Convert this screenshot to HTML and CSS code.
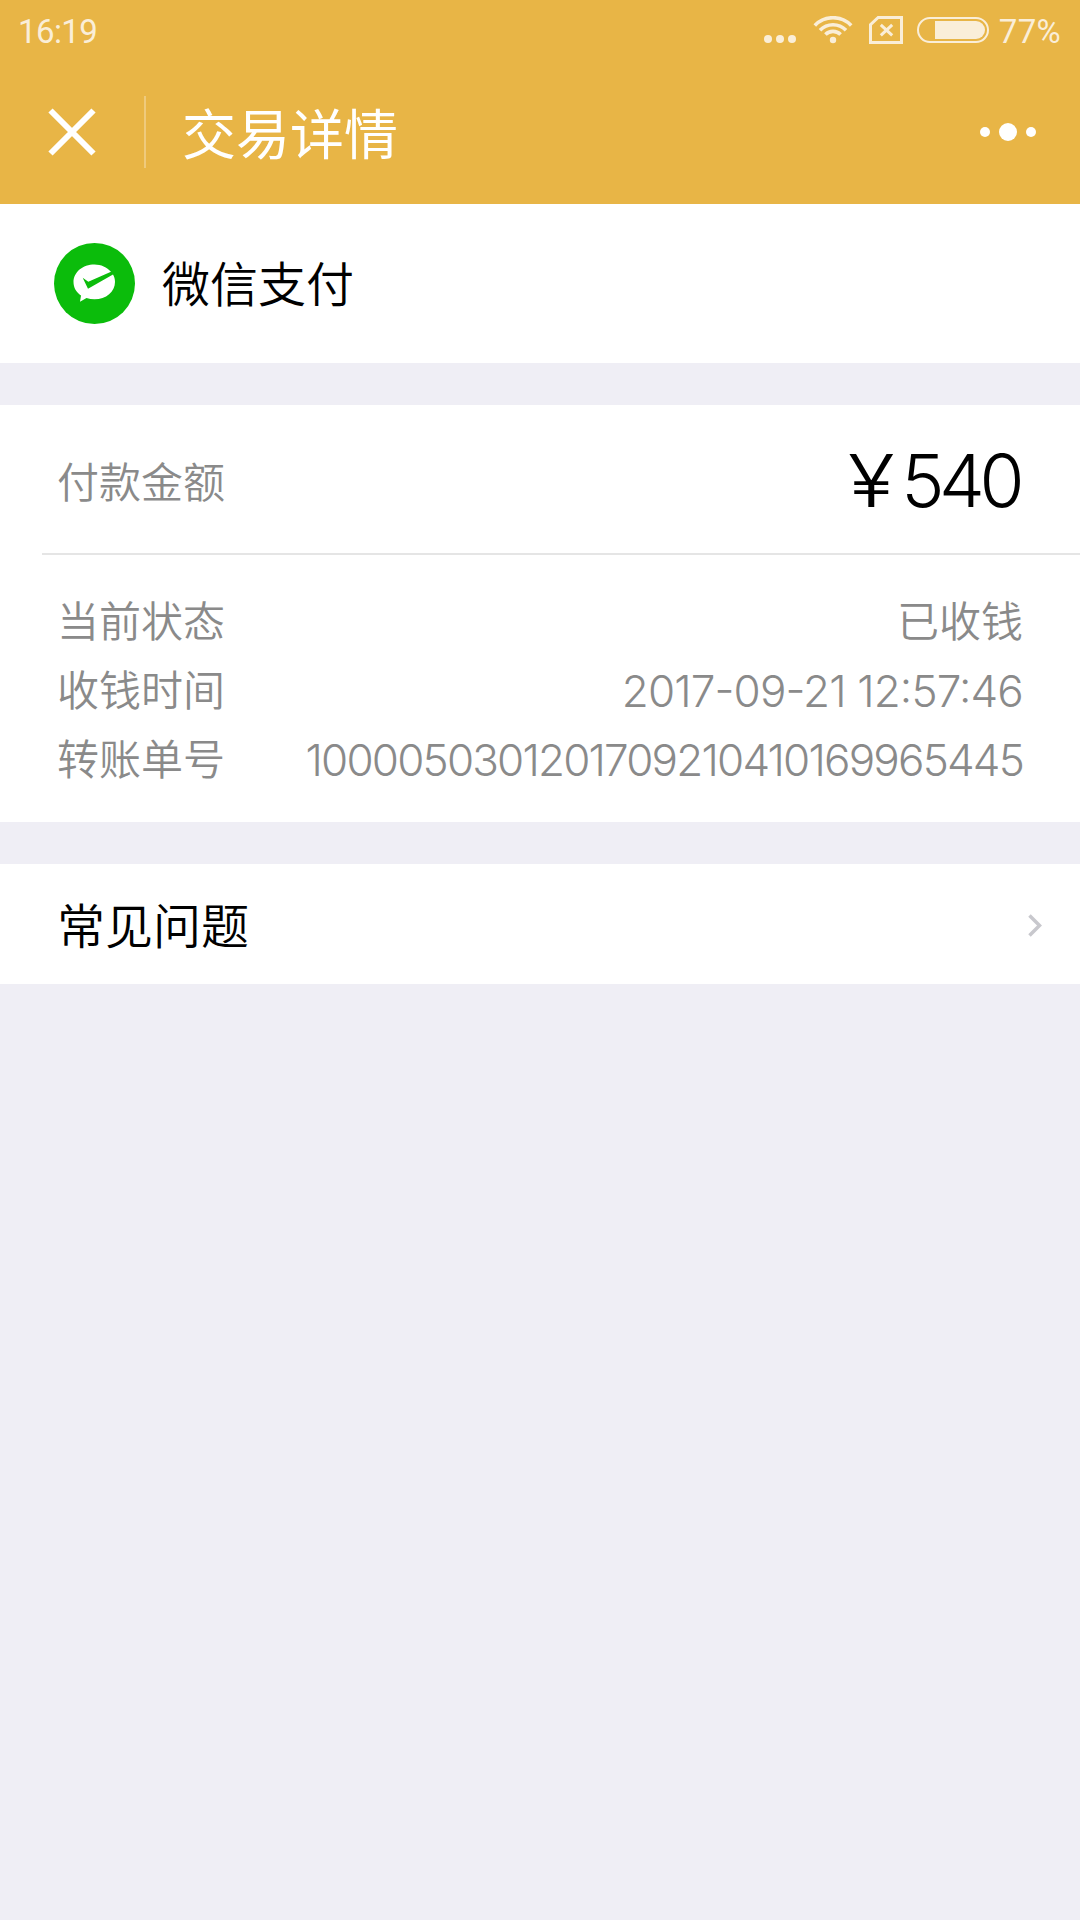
FILE: index.html
```html
<!DOCTYPE html>
<html lang="zh-CN">
<head>
    <meta charset="UTF-8">
    <meta name="viewport" content="width=device-width, initial-scale=1.0">
    <title>交易详情</title>
    <link rel="stylesheet" href="styles.css">
</head>
<body>

<header>
    <!-- 状态栏 -->
    <div class="status-bar">
        <span class="time">16:19</span>
        <div class="status-icons">
            <svg class="signal" width="32" height="8" viewBox="0 0 32 8">
                <circle cx="4" cy="4" r="4"/>
                <circle cx="16" cy="4" r="4"/>
                <circle cx="28" cy="4" r="4"/>
            </svg>
            <svg class="wifi" width="40" height="28" viewBox="0 0 40 28">
                <circle class="dot" cx="20" cy="24" r="3.2"/>
                <path d="M12.4 18.6a10.6 10.6 0 0 1 15.2 0"/>
                <path d="M7 14.2a18.2 18.2 0 0 1 26 0"/>
                <path d="M1.8 9.4a25.4 25.4 0 0 1 36.4 0"/>
            </svg>
            <svg class="sim" width="34" height="28" viewBox="0 0 34 28">
                <path d="M9.2 1.5H32.5v25H1.5V8.600z"/>
                <path d="M11.8 8.8l11.4 10.6M23.2 8.800L11.8 19.400"/>
            </svg>
            <div class="battery"><div class="level"></div></div>
            <span class="percent">77%</span>
        </div>
    </div>

    <!-- 标题栏 -->
    <div class="nav-bar">
        <svg class="close" width="48" height="48" viewBox="0 0 48 48">
            <path d="M2.5 2.5l43 43M45.5 2.5l-43 43"/>
        </svg>
        <div class="nav-line"></div>
        <h1>交易详情</h1>
        <svg class="more" width="56" height="18" viewBox="0 0 56 18">
            <circle cx="5" cy="9" r="5"/>
            <circle cx="28" cy="9" r="9"/>
            <circle cx="51" cy="9" r="5"/>
        </svg>
    </div>
</header>

<div class="card pay">
    <svg class="logo" width="81" height="81" viewBox="0.5 0.5 81 81">
        <circle cx="41" cy="41" r="40.5" fill="#0bbc0b"/>
        <path fill="#fff" d="M57.5 29.2C53.5 24.8 47.5 22 41 22c-11.800 0-21 7.800-21 17.500 0 5.600 2.800 10.300 7.500 13.500L26.500 59.200l6.500-3.600c2.500.8 5.200 1.200 8 1.200 11.600 0 20.500-7.500 20.500-17.300 0-2.700-.7-5.200-2-7.400L34.500 46.200 29.200 35.300l5.600 3.900z"/>
    </svg>
    <span class="pay-name">微信支付</span>
</div>

<div class="card detail">
    <div class="amount-row">
        <span>付款金额</span>
        <span class="amount"><span class="yen">¥</span>540</span>
    </div>
    <div class="detail-list">
        <div class="row">
            <span>当前状态</span>
            <span class="value">已收钱</span>
        </div>
        <div class="row">
            <span>收钱时间</span>
            <span class="value number date">2017-09-21 12:57:46</span>
        </div>
        <div class="row">
            <span>转账单号</span>
            <span class="value number">1000050301201709210410169965445</span>
        </div>
    </div>
</div>

<div class="card faq">
    <span>常见问题</span>
    <svg class="arrow" width="14" height="24" viewBox="0 0 14 24">
        <path d="M1.5 2.5L11.5 12.500 1.5 22.5"/>
    </svg>
</div>

</body>
</html>
```
FILE: styles.css
```css
body {
    font-family: "Noto Sans CJK SC", sans-serif;
    font-weight: 350;
    margin: 0;
    padding: 0;
    background-color: #efeef5;
}

header {
    height: 204px;
    background-color: #e8b546;
    color: white;
}

/* 状态栏 */
.status-bar {
    display: flex;
    justify-content: space-between;
    align-items: center;
    height: 60px;
    padding: 0 19px 0 18px;
    color: #faeed8;
    font-size: 33px;
    font-weight: 400;
    font-family: Roboto, sans-serif;
}

.time {
    padding-top: 2px;
    letter-spacing: -0.6px;
}

.status-icons {
    display: flex;
    align-items: center;
    fill: #faeed8;
}

.signal {
    margin: 18px 17px 0 0;
}

.wifi {
    margin-right: 16px;
}

.wifi path {
    fill: none;
    stroke: #faeed8;
    stroke-width: 3.6;
}

.sim {
    margin-right: 14px;
}

.sim path {
    fill: none;
    stroke: #faeed8;
    stroke-width: 3;
}

.battery {
    box-sizing: border-box;
    width: 72px;
    height: 26px;
    border: 2px solid #faeed8;
    border-radius: 13px;
    padding: 2px;
    margin-right: 10px;
}

.level {
    width: 50px;
    height: 18px;
    margin-left: auto;
    background-color: #faeed8;
    border-radius: 0 9px 9px 0;
}

.percent {
    padding-top: 2px;
    letter-spacing: 0.3px;
}

/* 标题栏 */
.nav-bar {
    display: flex;
    align-items: center;
    height: 144px;
    padding: 0 44px 0 48px;
}

.close {
    stroke: white;
    stroke-width: 6;
}

.nav-line {
    width: 2px;
    height: 72px;
    margin: 0 36px 0 48px;
    background-color: #efca7c;
}

h1 {
    margin: 0;
    font-size: 54px;
    font-weight: 400;
    line-height: 72px;
}

.more {
    margin-left: auto;
    fill: white;
}

.card {
    background-color: #fff;
    margin-bottom: 42px;
}

.pay {
    display: flex;
    align-items: center;
    height: 159px;
    padding-left: 54px;
}

.pay-name {
    margin-left: 27px;
    padding-bottom: 6px;
    font-size: 48px;
}

.detail {
    height: 417px;
    color: #8a8a8a;
    font-size: 42px;
}

.amount-row {
    display: flex;
    justify-content: space-between;
    align-items: center;
    height: 148px;
    margin-left: 42px;
    padding: 0 57px 0 15px;
    border-bottom: 2px solid #e5e5e5;
}

.amount {
    color: #000;
    font-family: Inter, sans-serif;
    font-size: 73px;
    font-weight: 300;
    letter-spacing: -5.5px;
    margin-right: -4px;
    padding: 3px 8px 0 0;
}

.yen {
    display: inline-block;
    margin-right: 13px;
    transform: scaleX(1.18);
    transform-origin: right;
}

.detail-list {
    padding: 29px 57px 0 57px;
}

.row {
    display: flex;
    justify-content: space-between;
    height: 69px;
    line-height: 69px;
}

.number {
    font-family: Inter, sans-serif;
    font-size: 44px;
    font-weight: 300;
    letter-spacing: -1.8px;
    padding-top: 4px;
    font-feature-settings: "case";
}

.date {
    letter-spacing: -0.85px;
}

/* 常见问题 */
.faq {
    display: flex;
    justify-content: space-between;
    align-items: center;
    height: 120px;
    padding: 0 38px 0 57px;
    font-size: 48px;
}

.faq span {
    padding-bottom: 3px;
}

.arrow {
    fill: none;
    stroke: #c8c8cd;
    stroke-width: 3.5;
    margin-top: 2px;
}
```
